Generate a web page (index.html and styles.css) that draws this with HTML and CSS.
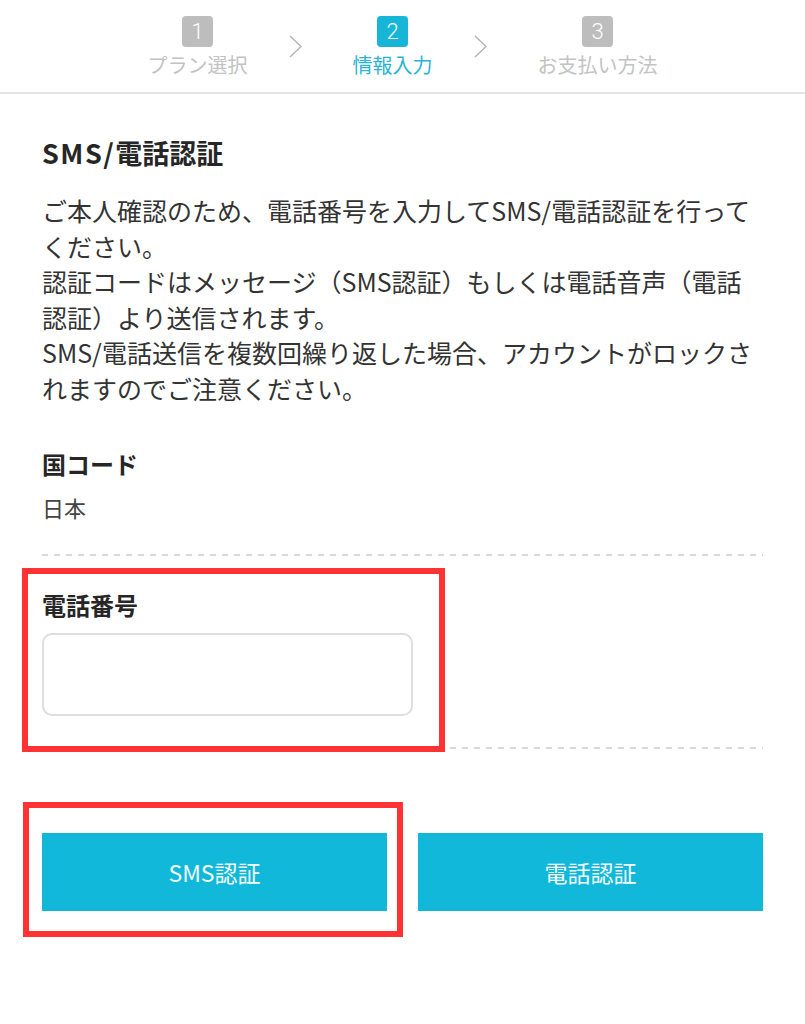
FILE: index.html
```html
<!DOCTYPE html>
<html lang="ja">
<head>
<meta charset="utf-8">
<title>SMS/電話認証</title>
<link rel="stylesheet" href="styles.css">
</head>
<body>
<header class="steps">
  <div class="step">
    <div class="step-num">1</div>
    <div class="step-label">プラン選択</div>
  </div>
  <svg class="chev" width="13" height="23" viewBox="0 0 13 23"><path d="M1 1 L12 11.5 L1 22" fill="none" stroke="#b3b3b3" stroke-width="1.4"/></svg>
  <div class="step step-active">
    <div class="step-num">2</div>
    <div class="step-label">情報入力</div>
  </div>
  <svg class="chev" width="13" height="23" viewBox="0 0 13 23"><path d="M1 1 L12 11.5 L1 22" fill="none" stroke="#b3b3b3" stroke-width="1.4"/></svg>
  <div class="step">
    <div class="step-num">3</div>
    <div class="step-label">お支払い方法</div>
  </div>
</header>

<main class="content">
  <h1 class="title"><span class="latin">SMS/</span>電話認証</h1>
  <p class="desc">ご本人確認のため、電話番号を入力してSMS/電話認証を行ってください。<br>認証コードはメッセージ（SMS認証）もしくは電話音声（電話認証）より送信されます。<br>SMS/電話送信を複数回繰り返した場合、アカウントがロックされますのでご注意ください。</p>

  <section class="country">
    <div class="field-label">国コード</div>
    <div class="country-value">日本</div>
  </section>
  <div class="dash dash-1"></div>

  <section class="phone">
    <div class="field-label">電話番号</div>
    <input class="phone-input" type="tel" aria-label="電話番号">
    <div class="annot annot-phone"></div>
  </section>
  <div class="dash dash-2"></div>

  <div class="buttons">
    <div class="btn-wrap">
      <button class="btn">SMS認証</button>
      <div class="annot annot-btn"></div>
    </div>
    <button class="btn">電話認証</button>
  </div>
</main>
</body>
</html>
```

FILE: styles.css
```css
html, body {
  margin: 0;
  padding: 0;
  background: #ffffff;
}

body {
  font-family: "Noto Sans CJK JP", "Noto Sans", sans-serif;
  color: #333333;
  min-height: 1024px;
}

/* Step header */
.steps {
  display: flex;
  justify-content: center;
  align-items: flex-start;
  padding: 16px 0 15px;
  border-bottom: 2px solid #e3e3e3;
}

.step {
  display: flex;
  flex-direction: column;
  align-items: center;
}

.step-num {
  width: 31px;
  height: 31px;
  border-radius: 4px;
  background: #bdbdbd;
  color: #ffffff;
  font-family: Roboto, "Noto Sans", sans-serif;
  font-weight: 300;
  font-size: 22px;
  line-height: 31px;
  text-align: center;
}

.step-label {
  margin-top: 6px;
  font-size: 20px;
  line-height: 24px;
  color: #c3c3c3;
  white-space: nowrap;
}

.step-active .step-num {
  background: #17b5d6;
}

.step-active .step-label {
  color: #2ab3d4;
}

.chev {
  display: block;
  margin: 19px 51px 0 41px;
  flex: none;
}

/* Content */
.content {
  padding: 0 42px 120px;
}

.title {
  margin: 42px 0 0;
  font-size: 27px;
  line-height: 34px;
  font-weight: 700;
  color: #262626;
}

.title .latin {
  letter-spacing: 1.5px;
}

.desc {
  margin: 23px 0 0;
  font-size: 25px;
  line-height: 35.6px;
  color: #333333;
}

.field-label {
  font-size: 24px;
  line-height: 32px;
  font-weight: 700;
  color: #262626;
}

.country {
  margin-top: 41px;
}

.country-value {
  margin-top: 12px;
  font-size: 22px;
  line-height: 30px;
  color: #444444;
}

.dash {
  height: 2px;
  background: repeating-linear-gradient(90deg, #d9d9d9 0 6px, transparent 6px 12px);
}

.dash-1 {
  margin-top: 32px;
}

.phone {
  position: relative;
  margin-top: 33px;
}

.phone-input {
  display: block;
  margin-top: 12px;
  width: 371px;
  height: 83px;
  box-sizing: border-box;
  border: 2px solid #dedede;
  border-radius: 10px;
  background: #ffffff;
  outline: none;
  padding: 0 16px;
  font-size: 22px;
}

.dash-2 {
  margin-top: 31px;
}

.buttons {
  display: grid;
  grid-template-columns: 1fr 1fr;
  gap: 31px;
  margin-top: 84px;
}

.btn-wrap {
  position: relative;
}

.btn {
  display: flex;
  align-items: center;
  justify-content: center;
  width: 100%;
  height: 78px;
  border: none;
  border-radius: 0;
  background: #11b8d9;
  color: #f4fcfe;
  font-family: "Noto Sans CJK JP", "Noto Sans", sans-serif;
  font-size: 23px;
  font-weight: 400;
  padding: 0;
}

/* Red annotation frames over content */
.annot {
  position: absolute;
  z-index: 2;
  box-sizing: border-box;
  border: 6px solid #ff3333;
  pointer-events: none;
}

.annot-phone {
  left: -20px;
  top: -21px;
  width: 423px;
  height: 184px;
}

.annot-btn {
  left: -19px;
  top: -31px;
  width: 380px;
  height: 135px;
}
```
